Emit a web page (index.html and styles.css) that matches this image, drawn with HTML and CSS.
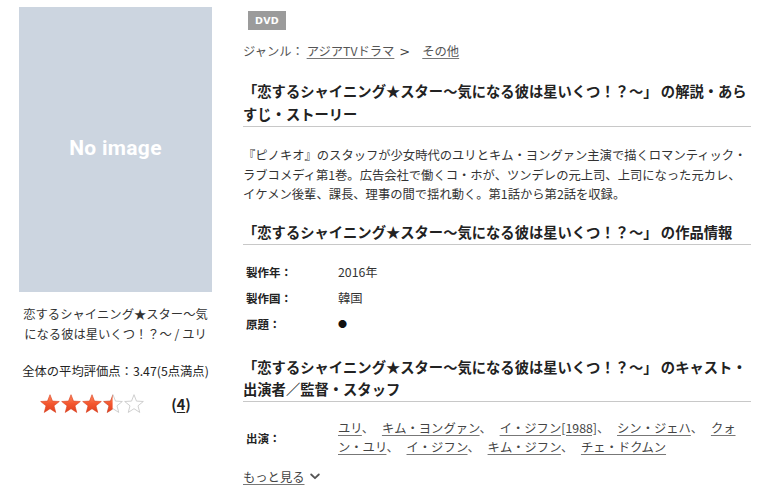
FILE: index.html
```html
<!DOCTYPE html>
<html lang="ja">
<head>
<meta charset="utf-8">
<title>恋するシャイニング★スター～気になる彼は星いくつ！？～</title>
<link rel="stylesheet" href="styles.css">
</head>
<body>
<svg class="defs" width="0" height="0" aria-hidden="true">
  <defs>
    <linearGradient id="starfill" x1="0" y1="0" x2="0" y2="1">
      <stop offset="0" stop-color="#ff8a62"/>
      <stop offset="0.5" stop-color="#f4572f"/>
      <stop offset="1" stop-color="#e0401f"/>
    </linearGradient>
    <clipPath id="halfclip"><rect x="0" y="0" width="9.6" height="20"/></clipPath>
  </defs>
</svg>
<div class="page">
  <aside class="side">
    <div class="noimage"><span>No image</span></div>
    <p class="title">恋するシャイニング★スター～気になる彼は星いくつ！？～ / ユリ</p>
    <p class="avg">全体の平均評価点：3.47(5点満点)</p>
    <div class="rating">
      <span class="stars">
        <svg class="star" viewBox="0 0 20 20"><polygon class="full" points="10,0.7 12.47,7.1 19.32,7.47 13.99,11.8 15.76,18.43 10,14.7 4.24,18.43 6.01,11.8 0.68,7.47 7.53,7.1"/></svg>
        <svg class="star" viewBox="0 0 20 20"><polygon class="full" points="10,0.7 12.47,7.1 19.32,7.47 13.99,11.8 15.76,18.43 10,14.7 4.24,18.43 6.01,11.8 0.68,7.47 7.53,7.1"/></svg>
        <svg class="star" viewBox="0 0 20 20"><polygon class="full" points="10,0.7 12.47,7.1 19.32,7.47 13.99,11.8 15.76,18.43 10,14.7 4.24,18.43 6.01,11.8 0.68,7.47 7.53,7.1"/></svg>
        <svg class="star" viewBox="0 0 20 20"><polygon class="empty" points="10,0.7 12.47,7.1 19.32,7.47 13.99,11.8 15.76,18.43 10,14.7 4.24,18.43 6.01,11.8 0.68,7.47 7.53,7.1"/><polygon class="full" clip-path="url(#halfclip)" points="10,0.7 12.47,7.1 19.32,7.47 13.99,11.8 15.76,18.43 10,14.7 4.24,18.43 6.01,11.8 0.68,7.47 7.53,7.1"/></svg>
        <svg class="star" viewBox="0 0 20 20"><polygon class="empty" points="10,0.7 12.47,7.1 19.32,7.47 13.99,11.8 15.76,18.43 10,14.7 4.24,18.43 6.01,11.8 0.68,7.47 7.53,7.1"/></svg>
      </span>
      <span class="count">(<a href="#">4</a>)</span>
    </div>
  </aside>
  <main class="main">
    <div class="badges"><span class="badge">DVD</span></div>
    <p class="genre">ジャンル： <a href="#">アジアTVドラマ</a><span class="sep">&gt;</span><a href="#">その他</a></p>

    <h2 class="heading">「恋するシャイニング★スター～気になる彼は星いくつ！？～」 の解説・あらすじ・ストーリー</h2>
    <p class="story">『ピノキオ』のスタッフが少女時代のユリとキム・ヨングァン主演で描くロマンティック・ラブコメディ第1巻。広告会社で働くコ・ホが、ツンデレの元上司、上司になった元カレ、イケメン後輩、課長、理事の間で揺れ動く。第1話から第2話を収録。</p>

    <h2 class="heading">「恋するシャイニング★スター～気になる彼は星いくつ！？～」 の作品情報</h2>
    <dl class="info">
      <div class="row"><dt>製作年：</dt><dd>2016年</dd></div>
      <div class="row"><dt>製作国：</dt><dd>韓国</dd></div>
      <div class="row"><dt>原題：</dt><dd><span class="dot">●</span></dd></div>
    </dl>

    <h2 class="heading">「恋するシャイニング★スター～気になる彼は星いくつ！？～」 のキャスト・出演者／監督・スタッフ</h2>
    <div class="cast">
      <div class="cast-label">出演：</div>
      <div class="cast-list"><a href="#">ユリ</a>、 <a href="#">キム・ヨングァン</a>、 <a href="#">イ・ジフン[1988]</a>、 <a href="#">シン・ジェハ</a>、 <a href="#">クォン・ユリ</a>、 <a href="#">イ・ジフン</a>、 <a href="#">キム・ジフン</a>、 <a href="#">チェ・ドクムン</a></div>
    </div>
    <a class="more" href="#">もっと見る<svg class="chev" viewBox="0 0 10 7" width="10" height="7"><polyline points="1.2,1.5 5,5.2 8.8,1.5"/></svg></a>
  </main>
</div>
</body>
</html>
```

FILE: styles.css
```css
html, body {
  margin: 0;
  padding: 0;
  background: #fff;
}
body {
  font-family: "Noto Sans CJK JP", "Noto Sans", sans-serif;
  color: #333;
  font-size: 12.3px;
}
.defs {
  position: absolute;
  width: 0;
  height: 0;
  overflow: hidden;
}
a {
  color: #333;
  text-decoration: underline;
  text-decoration-color: #777;
  text-underline-offset: 2px;
}
p, h2, dl, dd, dt {
  margin: 0;
}

.page {
  display: flex;
  align-items: flex-start;
  padding: 7px 0 0 19px;
  gap: 31px;
}

/* left column */
.side {
  width: 193px;
  flex: none;
  text-align: center;
}
.noimage {
  height: 285px;
  background: #ccd5e0;
  display: flex;
  align-items: center;
  justify-content: center;
}
.noimage span {
  font-family: Roboto, "Liberation Sans", sans-serif;
  font-weight: 700;
  font-size: 21px;
  color: #fff;
  letter-spacing: 0.3px;
  margin-top: -3px;
}
.title {
  margin-top: 12px;
  line-height: 20px;
  color: #333;
}
.avg {
  margin-top: 17px;
  line-height: 20px;
  color: #222;
}
.rating {
  margin-top: 12px;
  display: flex;
  align-items: center;
  justify-content: center;
  gap: 27px;
}
.stars {
  display: flex;
  gap: 1px;
  height: 20px;
}
.star {
  width: 20px;
  height: 20px;
  display: block;
}
.star .full {
  fill: url(#starfill);
  stroke: #d8401e;
  stroke-width: 0.6;
  stroke-linejoin: round;
}
.star .empty {
  fill: #fff;
  stroke: #c9c9c9;
  stroke-width: 0.9;
  stroke-linejoin: round;
}
.count {
  font-weight: 700;
  font-size: 14.5px;
  color: #222;
}
.count a {
  color: #222;
  text-decoration-color: #222;
}

/* right column */
.main {
  width: 508px;
  flex: none;
}
.badges {
  padding: 3px 0 0 5px;
  height: 19px;
}
.badge {
  display: inline-block;
  background: #9b9b9b;
  color: #fff;
  font-family: "DejaVu Sans", "Liberation Sans", sans-serif;
  font-weight: 700;
  font-size: 9.5px;
  line-height: 19px;
  padding: 0 7px;
  letter-spacing: 0.3px;
}
.genre {
  margin-top: 12px;
  line-height: 20px;
  color: #555;
}
.genre a {
  color: #555;
}
.sep {
  font-family: "DejaVu Sans", sans-serif;
  font-size: 13px;
  margin: 0 12px 0 5px;
  color: #444;
}
.heading {
  font-size: 14.3px;
  font-weight: 700;
  line-height: 23px;
  color: #222;
  padding-bottom: 1px;
  border-bottom: 1px solid #c8c8c8;
  margin-top: 17px;
}
.story {
  margin-top: 19px;
  line-height: 19.5px;
  color: #333;
  margin-bottom: 15px;
}
.story + .heading {
  margin-top: 0;
}
.info {
  margin-top: 14px;
  margin-bottom: 19px;
}
.info + .heading {
  margin-top: 0;
  line-height: 22px;
}
.row {
  display: flex;
  height: 26px;
  align-items: center;
}
.row dt {
  width: 92px;
  padding-left: 3px;
  font-weight: 700;
  font-size: 11.5px;
  color: #222;
}
.row dd {
  color: #333;
}
.dot {
  display: inline-block;
  font-size: 9px;
  color: #111;
  transform: translateY(-2px);
}
.cast {
  display: flex;
  align-items: center;
  margin-top: 17px;
}
.cast-label {
  width: 92px;
  padding-left: 3px;
  flex: none;
  font-weight: 700;
  font-size: 11.5px;
  color: #222;
}
.cast-list {
  flex: 1;
  line-height: 19px;
  color: #555;
}
.cast-list a {
  color: #444;
}
.cast-list a + a {
  margin-left: 5px;
}
.more {
  display: inline-flex;
  align-items: center;
  gap: 5px;
  margin-top: 10px;
  line-height: 20px;
  color: #444;
}
.chev {
  display: block;
  fill: none;
  stroke: #555;
  stroke-width: 1.8;
  stroke-linecap: round;
  stroke-linejoin: round;
}
```
